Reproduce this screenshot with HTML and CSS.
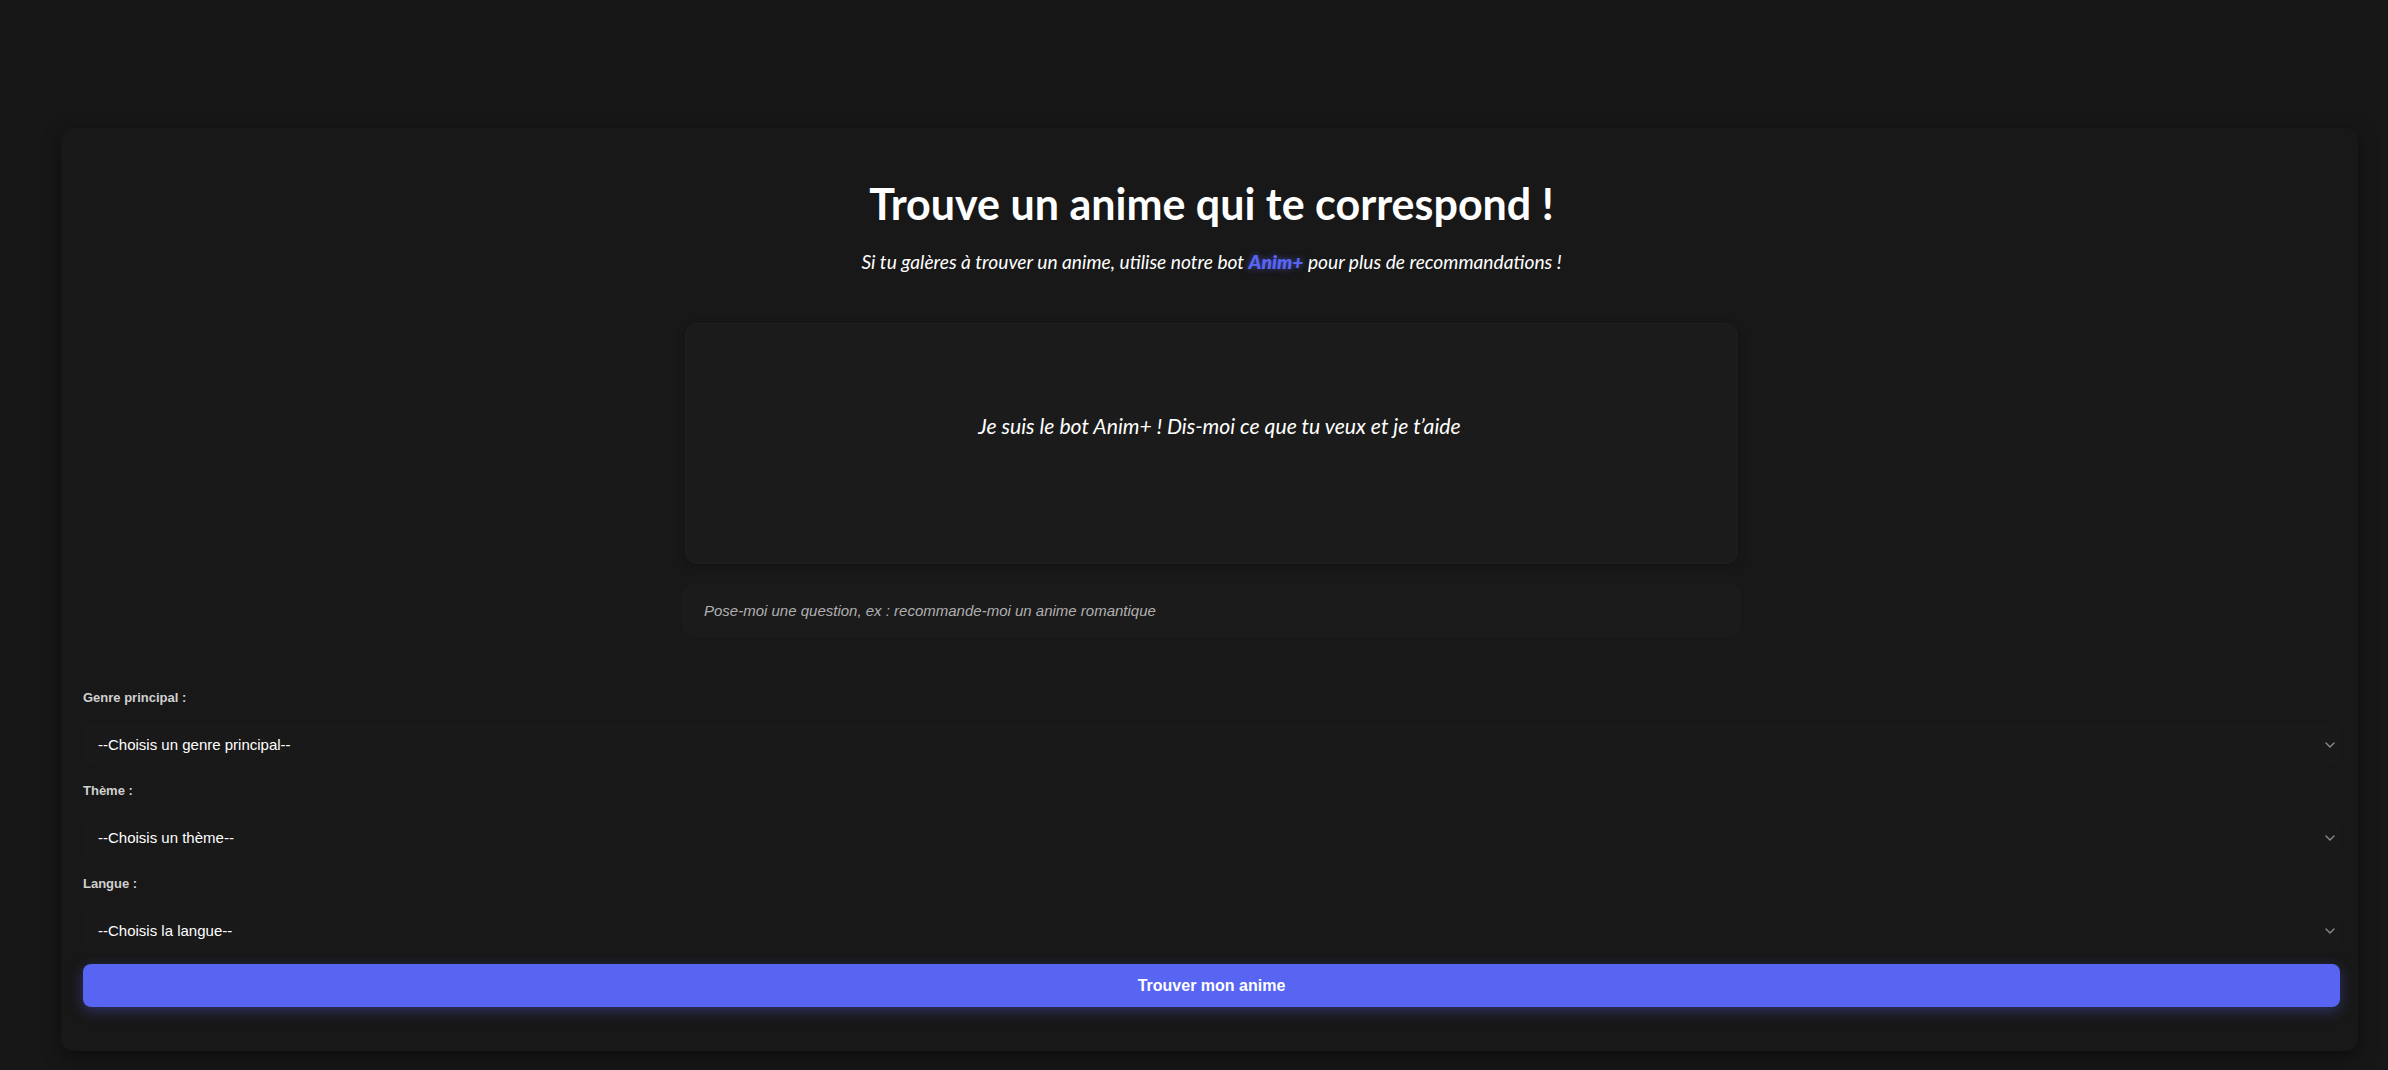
FILE: index.html
```html
<!DOCTYPE html>
<html lang="fr">
<head>
<meta charset="utf-8">
<title>Trouve un anime</title>
<link rel="stylesheet" href="styles.css">
</head>
<body>
<div class="page">
  <main class="card">
    <h1 class="title">Trouve un anime qui te correspond !</h1>
    <p class="subtitle">Si tu galères à trouver un anime, utilise notre bot <strong class="brand">Anim+</strong> pour plus de recommandations !</p>

    <section class="chat">
      <div class="chat-box">
        <p class="bot-msg">Je suis le bot Anim+ ! Dis-moi ce que tu veux et je t’aide</p>
      </div>
      <input class="chat-input" type="text" placeholder="Pose-moi une question, ex : recommande-moi un anime romantique">
    </section>

    <form class="form">
      <div class="field">
        <label class="label" for="genre">Genre principal :</label>
        <div class="select-wrap">
          <select id="genre" class="select"><option>--Choisis un genre principal--</option></select>
          <svg class="chev" width="10" height="6" viewBox="0 0 10 6"><path d="M1 1l4 4 4-4" fill="none" stroke="#8a8a8a" stroke-width="1.4" stroke-linecap="round" stroke-linejoin="round"/></svg>
        </div>
      </div>
      <div class="field">
        <label class="label" for="theme">Thème :</label>
        <div class="select-wrap">
          <select id="theme" class="select"><option>--Choisis un thème--</option></select>
          <svg class="chev" width="10" height="6" viewBox="0 0 10 6"><path d="M1 1l4 4 4-4" fill="none" stroke="#8a8a8a" stroke-width="1.4" stroke-linecap="round" stroke-linejoin="round"/></svg>
        </div>
      </div>
      <div class="field">
        <label class="label" for="langue">Langue :</label>
        <div class="select-wrap">
          <select id="langue" class="select"><option>--Choisis la langue--</option></select>
          <svg class="chev" width="10" height="6" viewBox="0 0 10 6"><path d="M1 1l4 4 4-4" fill="none" stroke="#8a8a8a" stroke-width="1.4" stroke-linecap="round" stroke-linejoin="round"/></svg>
        </div>
      </div>
      <button class="submit" type="button">Trouver mon anime</button>
    </form>
  </main>
</div>
</body>
</html>
```
FILE: styles.css
```css
* { box-sizing: border-box; }

html, body {
  margin: 0;
  background: #171717;
  color: #fff;
}

body {
  font-family: "Liberation Sans", Arial, sans-serif;
}

.page {
  padding: 128px 30px 20px 61px;
}

.card {
  background: #181818;
  border-radius: 12px;
  box-shadow: 0 6px 20px rgba(0, 0, 0, 0.45);
  padding: 52px 18px 44px 22px;
}

.title {
  margin: 0;
  text-align: center;
  font-family: Lato, "Open Sans", sans-serif;
  font-weight: 700;
  font-size: 43px;
  line-height: 48px;
  color: #fff;
}

.subtitle {
  margin: 23px 0 0;
  text-align: center;
  font-family: Lato, "Open Sans", sans-serif;
  font-style: italic;
  font-size: 19.2px;
  line-height: 22px;
  color: #fff;
}

.brand {
  color: #5865f2;
  font-weight: 800;
  text-shadow: 0 0 6px rgba(88, 101, 242, 0.6);
}

.chat {
  display: flex;
  flex-direction: column;
  align-items: center;
  margin-top: 50px;
}

.chat-box {
  width: 1053px;
  height: 241px;
  background: #1b1b1b;
  border: 1px solid #1f1f1f;
  border-radius: 12px;
  padding: 90px 20px 0 36px;
  box-shadow: 0 2px 8px rgba(0, 0, 0, 0.25);
}

.bot-msg {
  margin: 0;
  text-align: center;
  font-family: Lato, "Open Sans", sans-serif;
  font-style: italic;
  font-size: 21.2px;
  line-height: 24px;
  color: #fff;
}

.chat-input {
  display: block;
  width: 1059px;
  height: 53px;
  margin-top: 20px;
  background: #1b1b1b;
  border: 1px solid #1c1c1c;
  border-radius: 12px;
  padding: 0 21px;
  font-family: "Liberation Sans", Arial, sans-serif;
  font-size: 15px;
  font-style: italic;
  color: #ddd;
  outline: none;
}

.chat-input::placeholder {
  color: #b0b0b0;
  font-style: italic;
}

.form {
  display: flex;
  flex-direction: column;
  margin-top: 53px;
}

.field {
  display: flex;
  flex-direction: column;
  gap: 19px;
  margin-bottom: 18px;
}

.field:last-of-type {
  margin-bottom: 13px;
}

.label {
  font-size: 13px;
  font-weight: 700;
  line-height: 15px;
  color: #d0d0d0;
}

.select-wrap {
  position: relative;
}

.select {
  display: block;
  width: 100%;
  height: 41px;
  appearance: none;
  -webkit-appearance: none;
  background: #191919;
  border: none;
  border-radius: 8px;
  padding: 0 15px;
  font-family: "Liberation Sans", Arial, sans-serif;
  font-size: 15px;
  color: #fff;
  outline: none;
}

.chev {
  position: absolute;
  right: 5px;
  top: 18px;
  pointer-events: none;
}

.submit {
  display: block;
  width: 100%;
  height: 43px;
  background: #5865f2;
  border: none;
  border-radius: 8px;
  color: #fff;
  font-family: "Liberation Sans", Arial, sans-serif;
  font-size: 16px;
  font-weight: 700;
  box-shadow: 0 4px 14px rgba(88, 101, 242, 0.35);
  cursor: pointer;
}
```
